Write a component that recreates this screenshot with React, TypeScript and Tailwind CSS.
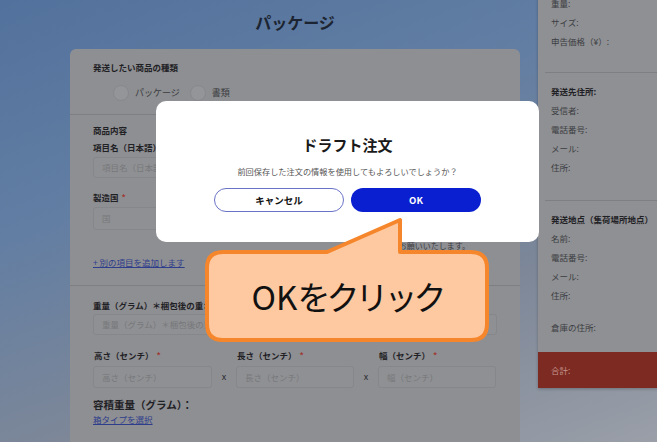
import React from "react";

function Radio({ label }: { label: string }) {
  return (
    <div className="flex items-center">
      <div className="w-[16px] h-[16px] rounded-full bg-[#949598] border border-[#88898c]" />
      <span className="ml-[6px] text-[9px] leading-[12px] text-[#3a3c40]">{label}</span>
    </div>
  );
}

function Input({ ph, className = "" }: { ph: string; className?: string }) {
  return (
    <div
      className={
        "bg-[#8f9093] border border-[#86878a] rounded-[3px] flex items-center px-[8px] text-[8.5px] text-[#77787b] " +
        className
      }
    >
      {ph}
    </div>
  );
}

function Req() {
  return <span className="text-[#9e3a36] ml-[3px]">*</span>;
}

function PRow({ t, bold = false }: { t: string; bold?: boolean }) {
  return (
    <div
      className={
        "h-[19px] flex items-center text-[8.5px] " +
        (bold ? "font-bold text-[#1f2125]" : "text-[#3b3d42]")
      }
    >
      {t}
    </div>
  );
}

export default function App() {
  return (
    <div className="relative w-[657px] h-[442px] overflow-hidden font-['Noto_Sans_CJK_JP',sans-serif] bg-[linear-gradient(160deg,#52719c_0%,#627ea3_35%,#7d8798_68%,#9a9fa8_100%)]">
      <div className="flex">
        {/* left column */}
        <div className="w-[538px] shrink-0">
          <div className="ml-[70px] w-[450px] h-[44px] flex items-center justify-center text-[16px] font-bold text-[#1c2431]">
            パッケージ
          </div>
          <div className="ml-[70px] mt-[5px] w-[450px] h-[400px] bg-[#8e8f92] rounded-t-[6px]">
            {/* section 1 */}
            <div className="h-[66px] border-b border-[#7e7f82] px-[23px] pt-[12px]">
              <div className="text-[8.5px] leading-[12px] font-bold text-[#1f2125]">発送したい商品の種類</div>
              <div className="mt-[12px] ml-[20px] flex items-center gap-[10px]">
                <Radio label="パッケージ" />
                <Radio label="書類" />
              </div>
            </div>
            {/* section 2 */}
            <div className="border-b border-[#7e7f82] px-[23px] pt-[9px] pb-[17px]">
              <div className="text-[8.5px] leading-[12px] font-bold text-[#1f2125]">商品内容</div>
              <div className="mt-[5px] text-[8.5px] leading-[12px] font-bold text-[#1f2125]">項目名（日本語）</div>
              <Input ph="項目名（日本語）" className="mt-[4px] h-[21px]" />
              <div className="mt-[13px] text-[8.5px] leading-[12px] font-bold text-[#1f2125]">
                製造国<Req />
              </div>
              <Input ph="国" className="mt-[4px] h-[23px]" />
              <div className="mt-[10px] pr-[27px] text-right text-[8px] leading-[12px] text-[#3b3d42]">
                入力をお願いいたします。
              </div>
              <div className="mt-[4px] text-[8.5px] leading-[12px] text-[#2e3d8c] underline">
                + 別の項目を追加します
              </div>
            </div>
            {/* section 3 */}
            <div className="px-[23px] pt-[13px]">
              <div className="text-[8.5px] leading-[12px] font-bold text-[#1f2125]">
                重量（グラム）＊梱包後の重さを入力してください
              </div>
              <Input ph="重量（グラム）＊梱包後の重さ" className="mt-[3px] h-[21px]" />
              <div className="mt-[14px] flex text-[8.5px] leading-[12px] font-bold text-[#1f2125]">
                <div className="w-[143px] shrink-0 pl-[1px]">
                  高さ（センチ）<Req />
                </div>
                <div className="w-[142px] shrink-0 pl-[1px]">
                  長さ（センチ）<Req />
                </div>
                <div className="w-[118px] shrink-0 pl-[1px]">
                  幅（センチ）<Req />
                </div>
              </div>
              <div className="mt-[5px] flex h-[22px]">
                <Input ph="高さ（センチ）" className="w-[119px] shrink-0 h-[22px]" />
                <div className="w-[24px] shrink-0 flex items-center justify-center text-[9px] text-[#2a2c30]">x</div>
                <Input ph="長さ（センチ）" className="w-[118px] shrink-0 h-[22px]" />
                <div className="w-[24px] shrink-0 flex items-center justify-center text-[9px] text-[#2a2c30]">x</div>
                <Input ph="幅（センチ）" className="w-[118px] shrink-0 h-[22px]" />
              </div>
              <div className="mt-[10px] text-[10.5px] leading-[14px] font-bold text-[#1f2125]">容積重量（グラム）：</div>
              <div className="mt-[1px] text-[8.5px] leading-[12px] text-[#2e3d8c] underline">箱タイプを選択</div>
              <div className="mt-[14px] text-[10.5px] leading-[14px] font-bold text-[#1f2125]">ノート</div>
            </div>
          </div>
        </div>
        {/* right panel */}
        <div className="w-[130px] shrink-0 mt-[-6px] h-[394px] bg-[#8f9093] shadow-[0_1px_3px_rgba(0,0,0,0.25)] flex flex-col">
          <div className="px-[13px]">
            <PRow t="重量:" />
            <PRow t="サイズ:" />
            <PRow t="申告価格（¥）:" />
          </div>
          <div className="ml-[7px] mt-[21px] border-t border-[#7e7f82]" />
          <div className="px-[13px] mt-[9px]">
            <PRow t="発送先住所:" bold />
            <PRow t="受信者:" />
            <PRow t="電話番号:" />
            <PRow t="メール:" />
            <PRow t="住所:" />
          </div>
          <div className="ml-[7px] mt-[23px] border-t border-[#7e7f82]" />
          <div className="px-[13px] mt-[9px]">
            <PRow t="発送地点（集荷場所地点）" bold />
            <PRow t="名前:" />
            <PRow t="電話番号:" />
            <PRow t="メール:" />
            <PRow t="住所:" />
            <div className="mt-[13px]">
              <PRow t="倉庫の住所:" />
            </div>
          </div>
          <div className="mt-[15px] h-[37px] bg-[#7d2b22] px-[13px] flex items-center text-[8.5px] text-[#c4948d]">
            合計:
          </div>
        </div>
      </div>

      {/* modal */}
      <div className="absolute left-[156px] top-[101px] w-[383px] h-[141px] bg-white rounded-[10px] flex flex-col items-center pt-[34px]">
        <div className="text-[15px] leading-[20px] font-bold text-[#1a1a1a]">ドラフト注文</div>
        <div className="mt-[10px] text-[8.2px] leading-[12px] text-[#555]">
          前回保存した注文の情報を使用してもよろしいでしょうか？
        </div>
        <div className="mt-[11px] flex gap-[7px]">
          <div className="w-[130px] h-[24px] rounded-full border border-[#6a73c6] flex items-center justify-center text-[9.5px] font-bold text-[#111]">
            キャンセル
          </div>
          <div className="w-[130px] h-[24px] rounded-full bg-[#0a1fcf] flex items-center justify-center text-[9.5px] font-bold text-white">
            OK
          </div>
        </div>
      </div>

      {/* callout */}
      <svg className="absolute left-0 top-0 pointer-events-none" width="657" height="442" viewBox="0 0 657 442">
        <path
          d="M 223 252 L 327 252 L 400 220 L 400 252 L 471 252 Q 487 252 487 268 L 487 324 Q 487 340 471 340 L 223 340 Q 207 340 207 324 L 207 268 Q 207 252 223 252 Z"
          fill="#fec8a0"
          stroke="#f6862b"
          strokeWidth="4"
          strokeLinejoin="round"
        />
      </svg>
      <div className="absolute left-[205px] top-[250px] w-[284px] h-[92px] flex items-center justify-center text-[33px] leading-[40px] text-[#111]">
        <span>OK</span>
        <span className="tracking-[-4px]">をクリック</span>
      </div>
    </div>
  );
}
